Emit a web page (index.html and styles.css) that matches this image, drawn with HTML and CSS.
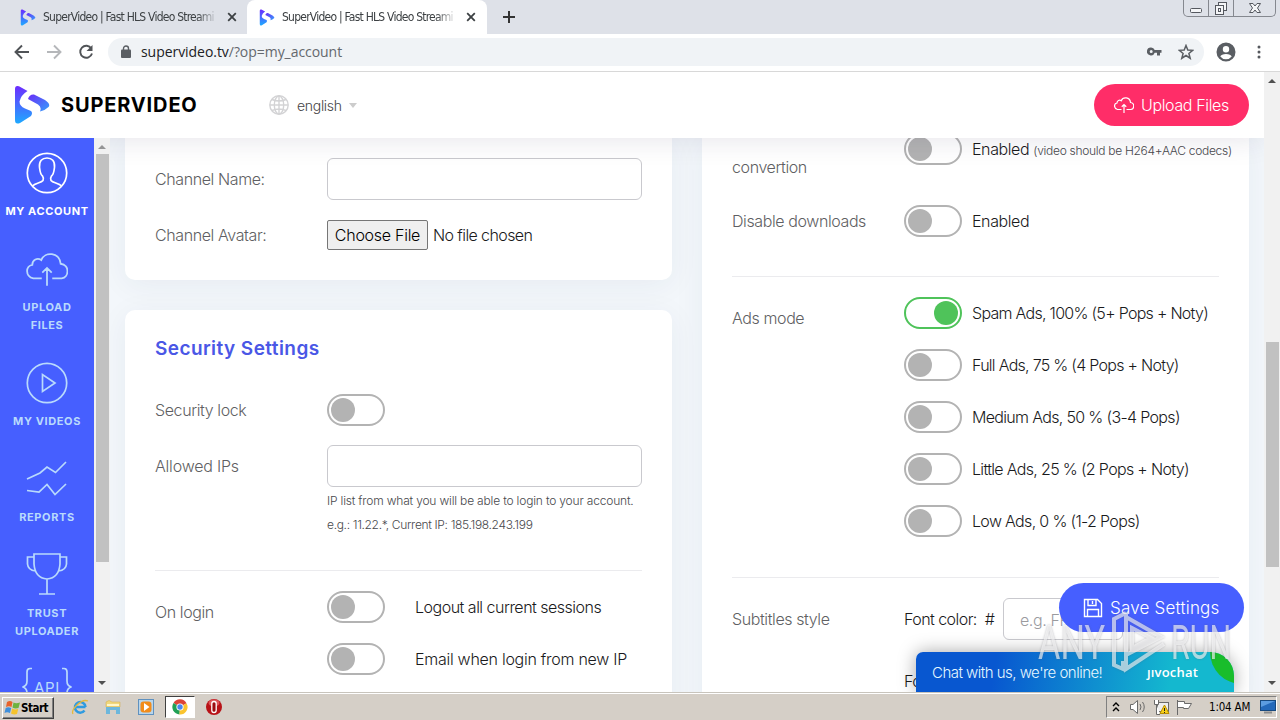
FILE: index.html
```html
<!DOCTYPE html>
<html lang="en">
<head>
<meta charset="utf-8">
<title>SuperVideo | Fast HLS Video Streaming</title>
<link rel="stylesheet" href="styles.css">
</head>
<body>
<svg width="0" height="0" class="defs">
  <defs>
    <linearGradient id="g1" x1="0" y1="0" x2="0" y2="1"><stop offset="0" stop-color="#6d2cff"/><stop offset="1" stop-color="#1eaaff"/></linearGradient>
    <linearGradient id="g2" x1="0" y1="0" x2="1" y2="1"><stop offset="0" stop-color="#6a2cf8"/><stop offset="1" stop-color="#35a0fb"/></linearGradient>
    <symbol id="logo" viewBox="0 0 36 40">
      <path fill="url(#g1)" d="M1 4Q1 0 5 1.200L13.500 6Q7 10 5.500 16.500Q5.500 21 11 23.500L17 26Q19 28 17 31L6 38Q1 40 1 35Z"/>
      <path fill="url(#g2)" d="M14 14Q15.500 9 20 9.500L31 15Q37 19 34.500 22Q31 25.500 26 26.500Q28 22 24 19.500Z"/>
    </symbol>
    <symbol id="cloud" viewBox="0 0 40 32">
      <path d="M15 25H7C-1 23-.5 13 6 12C6 7 11 5 14.500 7.500C18-1 32 0 33 11C42 12 41 24 34 25H25M20 32V15M15.500 19.500L20 15L24.500 19.500" fill="none" stroke="currentColor"/>
    </symbol>
  </defs>
</svg>

<div class="tabstrip">
  <div class="tab">
    <svg class="fav"><use href="#logo"/></svg><span class="tab-title">SuperVideo | Fast HLS Video Streami</span>
    <svg class="x" viewBox="0 0 10 10"><path d="M1.200 1.200L8.800 8.800M8.800 1.200L1.200 8.800"/></svg>
  </div>
  <div class="tab active">
    <svg class="fav"><use href="#logo"/></svg><span class="tab-title">SuperVideo | Fast HLS Video Streami</span>
    <svg class="x" viewBox="0 0 10 10"><path d="M1.200 1.200L8.800 8.800M8.800 1.200L1.200 8.800"/></svg>
  </div>
  <svg class="plus" viewBox="0 0 12 12"><path d="M6 0V12M0 6H12"/></svg>
  <div class="winbtns">
    <span class="wb"><svg width="14" height="16"><rect x="1.500" y="8.500" width="11" height="4" rx="1"/></svg></span>
    <span class="wb"><svg width="14" height="16"><rect x="4.500" y="2.500" width="8" height="8"/><rect x="1.500" y="5.500" width="8" height="9"/><rect x="4.500" y="8.500" width="2" height="3"/></svg></span>
    <span class="wb wide"><svg width="14" height="16"><path d="M1.500 3.500H5L7 6L9 3.500H12.500L9.500 8L12.500 12.500H9L7 10L5 12.500H1.500L4.500 8Z"/></svg></span>
  </div>
</div>

<div class="toolbar">
  <svg class="nav" viewBox="0 0 16 16"><path d="M15 8H2M8 1.500L1.500 8L8 14.500"/></svg>
  <svg class="nav dim" viewBox="0 0 16 16"><path d="M1 8H14M8 1.500L14.500 8L8 14.500"/></svg>
  <svg class="nav" viewBox="0 0 16 16"><path d="M13.300 4.500A6 6 0 1 0 14 9.500"/><path d="M14.500 1V7H8.500Z" class="fill"/></svg>
  <div class="omnibox">
    <svg class="lock" viewBox="0 0 10 13"><rect y="4.500" width="10" height="8.500" rx="1" fill="#5a5e63"/><path d="M2.500 5V3.500a2.500 2.500 0 0 1 5 0V5" fill="none" stroke="#5a5e63" stroke-width="1.400"/></svg>
    <span class="url"><b>supervideo.tv</b>/?op=my_account</span>
    <svg class="key" viewBox="0 0 15 9"><path d="M4.200 0.500a4 4 0 1 0 3.500 5.300H10V8.500h3V5.800h1.500V3H7.700A4 4 0 0 0 4.200.5ZM4.200 3a1.500 1.500 0 1 1 0 3a1.500 1.500 0 0 1 0-3Z" fill="#5a5e63" fill-rule="evenodd"/></svg>
    <svg class="star" viewBox="0 0 16 16"><path d="M8 1.500L9.800 6L14.700 6.300L10.900 9.400L12.200 14.200L8 11.500L3.800 14.200L5.100 9.400L1.300 6.300L6.200 6Z" fill="none" stroke="#5a5e63" stroke-width="1.500"/></svg>
  </div>
  <svg class="avatar" viewBox="0 0 20 20"><path fill-rule="evenodd" fill="#5a5e63" d="M10 .5a9.500 9.500 0 1 0 0 19a9.500 9.500 0 0 0 0-19ZM10 4a3.200 3.200 0 1 1 0 6.400A3.200 3.200 0 0 1 10 4ZM10 12c3 0 5.200 1.200 5.700 2.500a7.200 7.200 0 0 1-11.400 0C4.800 13.200 7 12 10 12Z"/></svg>
  <svg class="dots" viewBox="0 0 4 14"><circle cx="2" cy="2" r="1.500"/><circle cx="2" cy="7" r="1.500"/><circle cx="2" cy="12" r="1.500"/></svg>
</div>

<div class="viewport">
  <div class="page">
    <header class="header">
      <svg class="brand-mark"><use href="#logo"/></svg>
      <span class="brand">SUPERVIDEO</span>
      <svg class="globe" viewBox="0 0 20 20"><circle cx="10" cy="10" r="9.200"/><ellipse cx="10" cy="10" rx="4.700" ry="9"/><path d="M10 1V19M1 10H19M3 4.500Q10 7.500 17 4.500M3 15.500Q10 12.500 17 15.500"/></svg>
      <span class="lang">english</span><i class="caret"></i>
      <a class="btn-upload"><svg width="20" height="16"><use href="#cloud"/></svg><span>Upload Files</span></a>
    </header>
    <div class="body">
      <nav class="sidebar">
        <a class="item on"><svg width="42" height="42" viewBox="0 0 42 42"><circle cx="21" cy="21" r="19.700"/><path d="M6.500 34C9 31 15 31 17 28.500Q18 26 16.500 24C14 22 14 19 13.500 15C13 9 16 6 21 6S29 9 28.500 15C28 19 28 22 25.500 24Q24 26 25 28.500C27 31 33 31 35.500 34"/></svg><span>MY ACCOUNT</span></a>
        <a class="item"><svg class="cloudbig" width="42" height="34"><use href="#cloud"/></svg><span>UPLOAD<br>FILES</span></a>
        <a class="item"><svg width="42" height="42" viewBox="0 0 42 42"><circle cx="21" cy="21" r="19.700"/><path d="M16.500 12.500V29.500L29 21Z"/></svg><span>MY VIDEOS</span></a>
        <a class="item"><svg width="42" height="38" viewBox="0 0 42 38"><path d="M1 19L14 13L21 7L29.500 12.500L40 2M1 30.500L13 32L21 24.500L29 34.500L40 24"/></svg><span>REPORTS</span></a>
        <a class="item"><svg width="42" height="44" viewBox="0 0 42 44"><path d="M8 2H34V12Q33 26 21 27Q9 26 8 12ZM8 5H1.500V12Q2 18 9.500 19M34 5H40.500V12Q40 18 32.500 19M21 27V42M13 42H29"/></svg><span>TRUST<br>UPLOADER</span></a>
        <div class="item api"><svg width="52" height="30" viewBox="0 0 52 30"><path d="M11 1.500H9Q6 1.500 6 5V14Q6 19 1.500 20Q6 21 6 26V30M41 1.500H43Q46 1.500 46 5V14Q46 19 50.500 20Q46 21 46 26V30"/></svg><b>API</b></div>
      </nav>
      <div class="sb sb-side"><i class="up"></i><div class="thumb"></div><i class="down"></i></div>
      <main class="main">
        <div class="col">
          <section class="card channel">
            <div class="row"><label>Channel Name:</label><div class="input"></div></div>
            <div class="row"><label>Channel Avatar:</label><span class="filebtn"><span>Choose File</span></span><span class="nofile">No file chosen</span></div>
          </section>
          <section class="card security">
            <h2>Security Settings</h2>
            <div class="row lock-row"><label>Security lock</label><i class="toggle"></i></div>
            <div class="row"><label class="ips">Allowed IPs</label><div class="input"></div></div>
            <p class="hint"><span class="hint-a">IP list from what you will be able to login to your account.</span><br><span class="hint-b">e.g.: 11.22.*, Current IP: 185.198.243.199</span></p>
            <hr>
            <div class="row start"><label class="low">On login</label>
              <div class="stack wide-gap">
                <div class="opt"><i class="toggle"></i><span class="logout">Logout all current sessions</span></div>
                <div class="opt"><i class="toggle"></i><span class="email">Email when login from new IP</span></div>
              </div>
            </div>
          </section>
        </div>
        <div class="col">
          <section class="card right">
            <div class="row start"><label class="conv">convertion</label><div class="opt"><i class="toggle"></i><span>Enabled <small>(video should be H264+AAC codecs)</small></span></div></div>
            <div class="row dl"><label>Disable downloads</label><div class="opt"><i class="toggle"></i><span>Enabled</span></div></div>
            <hr>
            <div class="row start"><label class="low">Ads mode</label>
              <div class="stack ads">
                <div class="opt"><i class="toggle checked"></i><span>Spam Ads, 100% (5+ Pops + Noty)</span></div>
                <div class="opt"><i class="toggle"></i><span>Full Ads, 75 % (4 Pops + Noty)</span></div>
                <div class="opt"><i class="toggle"></i><span>Medium Ads, 50 % (3-4 Pops)</span></div>
                <div class="opt"><i class="toggle"></i><span>Little Ads, 25 % (2 Pops + Noty)</span></div>
                <div class="opt"><i class="toggle"></i><span>Low Ads, 0 % (1-2 Pops)</span></div>
              </div>
            </div>
            <hr class="second">
            <div class="row"><label>Subtitles style</label><span class="fc">Font color:&nbsp; #</span><div class="input hex">e.g. FFFFFF</div></div>
            <div class="row size"><label></label><span class="fc">Font size:</span></div>
          </section>
        </div>
      </main>
    </div>
    <a class="save"><svg width="20" height="20" viewBox="0 0 20 20"><path d="M1.500 1.500H14.500L18.500 5.500V18.500H1.500ZM5 1.500V7.500H13V1.500M9.500 3V6M4.500 18.500V11.500H15.500V18.500"/></svg><span>Save Settings</span></a>
    <div class="chat"><span>Chat with us, we're online!</span><em>ȷıvochat</em><i class="leaf"></i></div>
  </div>
  <div class="sb sb-page"><i class="up"></i><div class="thumb"></div><i class="down"></i></div>
  <div class="watermark"><span class="wm">ANY</span>
    <svg width="58" height="64" viewBox="0 0 58 64"><path d="M17 2L5 8V54L14 58V50M17 2V44L52 26L17 6M17 44V58L55 33M23 17L42 27L23 37Z"/></svg>
    <span class="wm run">RUN</span></div>
</div>

<div class="taskbar">
  <div class="start-btn"><svg width="17" height="16" viewBox="0 0 17 16"><path fill="#e8622a" d="M3 2Q6 0 8.500 2L7.500 7Q5 5.500 2 7Z"/><path fill="#6eb33f" d="M9.500 2.500Q12 4 16 2.500L14.500 8Q11 9 8.500 7.500Z"/><path fill="#3f8fdc" d="M1.700 8Q4 6.500 7.200 8L6 13Q3 11.500.5 13Z"/><path fill="#f5c32c" d="M8.200 8.500Q11 10 14.200 9L13 14Q10 15 7 13.500Z"/></svg><b>Start</b></div>
  <svg class="q ie" viewBox="0 0 18 18"><path d="M14.500 9H5M14.500 9A5.300 5.300 0 1 0 13.500 12.500" fill="none" stroke="#2f9be0" stroke-width="2.500"/><path d="M2 16Q0 13 6 7T17 3" fill="none" stroke="#e5b93c" stroke-width="1.300"/></svg>
  <svg class="q" viewBox="0 0 18 18"><path d="M2 4Q5 1 8 4H16V9H2Z" fill="#efd77d" stroke="#d2aa4b" stroke-width=".5"/><path d="M2 9H16V16H12V12H6V16H2Z" fill="#6db7dc"/><path d="M3 7H15" stroke="#fff6c8" stroke-width="2"/></svg>
  <svg class="q" viewBox="0 0 18 18"><rect x="1.500" y="1.500" width="15" height="15" fill="#b9d5ea" stroke="#5f91bf"/><rect x="3.500" y="3.500" width="11" height="11" rx="3" fill="#f28c1a"/><path d="M7 5V13L12.500 9Z" fill="#fff"/></svg>
  <div class="running"><svg width="16" height="16" viewBox="0 0 16 16"><path fill="#dc4437" d="M8 8L1.500 4A7.500 7.500 0 0 1 14.500 4.200Z"/><path fill="#21a056" d="M8 8L1.500 4A7.500 7.500 0 0 0 7.500 15.500Z"/><path fill="#fbc42e" d="M8 8L14.500 4.200A7.500 7.500 0 0 1 7.500 15.500Z"/><circle cx="8" cy="8" r="3.600" fill="#fff"/><circle cx="8" cy="8" r="2.700" fill="#4a87ee"/></svg></div>
  <svg class="q opera" viewBox="0 0 18 18"><circle cx="9" cy="9" r="8" fill="#b81217"/><ellipse cx="9" cy="5" rx="5.500" ry="3.500" fill="#e0565a"/><rect x="6.800" y="3.500" width="4.400" height="11" rx="2.200" fill="#9b0c10" stroke="#fff" stroke-width="1.300"/></svg>
  <div class="tray">
    <svg width="8" height="12" viewBox="0 0 8 12" class="chev"><path d="M1 5L4 2L7 5M1 10L4 7L7 10"/></svg>
    <svg width="18" height="16" viewBox="0 0 18 16" class="line"><path d="M1.500 5.500H4L8.500 1.500V14.500L4 10.500H1.500Z" fill="#fff"/><path d="M11 5Q13 8 11 11M13.500 3Q17 8 13.500 13" fill="none"/></svg>
    <svg width="17" height="17" viewBox="0 0 17 17" class="line"><rect x="4.500" y="3.500" width="11" height="9" fill="#eee"/><path d="M1.500 1V5.500H5.500V1M3.500 5V15.500H7" fill="#fff"/><path d="M11.500 6L16 14.500H7Z" fill="#f7cf18" stroke="#b98d00"/><path d="M11.500 9V12M11.500 13V14" stroke="#222"/></svg>
    <svg width="17" height="17" viewBox="0 0 17 17" class="line"><path d="M1.500 1V16M1.500 2.500H8.500V4.500H15.500L12.500 9.500H7.500V8.500H1.500" fill="#fff"/></svg>
    <span class="clock">1:04 AM</span>
    <svg width="16" height="14" viewBox="0 0 16 14" class="desk"><rect x=".5" y=".5" width="15" height="10" fill="#2469ba" stroke="#17497f"/><path d="M1 1H15L1 7Z" fill="#5c9ce0"/><path d="M4 12.500H12" stroke="#8d8d8d" stroke-width="2"/></svg>
  </div>
</div>
</body>
</html>
```
FILE: styles.css
```css
* { box-sizing: border-box; }
body { margin: 0; width: 1280px; height: 720px; overflow: hidden; display: flex; flex-direction: column; background: #fff; font-family: Inter, "Liberation Sans", sans-serif; font-size: 16px; font-weight: 300; color: #1a1a1c; }
svg { display: block; flex: none; }
.defs { position: absolute; }

/* Browser tabs */
.tabstrip { height: 34px; flex: none; background: #dee1e8; display: flex; align-items: flex-start; }
.tab { width: 240px; height: 34px; display: flex; align-items: center; padding-left: 13px; margin-left: 7px; border-radius: 8px 8px 0 0; }
.tab.active { background: #fff; margin-left: 0; padding-left: 12px; }
.fav { width: 16px; height: 17px; margin-right: 7px; }
.tab-title { width: 175px; overflow: hidden; white-space: nowrap; font: 12px "DejaVu Sans Condensed", "DejaVu Sans", sans-serif; font-stretch: condensed; letter-spacing: -.76px; color: #3c4043; -webkit-mask-image: linear-gradient(90deg, #000 88%, transparent); mask-image: linear-gradient(90deg, #000 88%, transparent); }
.x { width: 10px; height: 10px; margin-left: 9px; }
.x path { stroke: #3c4043; stroke-width: 1.8; }
.plus { width: 12px; height: 12px; margin: 11px 0 0 16px; }
.plus path { stroke: #333; stroke-width: 2; }
.winbtns { margin-left: auto; margin-right: 4px; width: 93px; height: 17px; display: flex; border: 1px solid #85888f; border-top: 0; border-radius: 0 0 5px 5px; }
.wb { width: 25px; display: flex; justify-content: center; border-right: 1px solid #85888f; }
.wb.wide { width: 41px; border: 0; }
.wb svg { fill: #f4f5f7; stroke: #55585f; stroke-width: 1; }

/* Browser toolbar */
.toolbar { height: 38px; flex: none; background: #fff; border-bottom: 1px solid #d8d8d8; display: flex; align-items: center; padding: 0 0 2px 14px; }
.nav { width: 16px; height: 16px; margin-right: 16px; fill: none; stroke: #505357; stroke-width: 1.9; }
.nav.dim { stroke: #b5b7ba; }
.nav .fill { fill: #505357; stroke: none; }
.omnibox { width: 1096px; height: 28px; margin-left: -2px; border-radius: 14px; background: #f0f3f6; display: flex; align-items: center; padding: 0 10px 0 13px; }
.lock { width: 10px; height: 13px; }
.url { margin-left: 10px; font: 14px "Open Sans", "Noto Sans", sans-serif; letter-spacing: -.05px; color: #64686d; }
.url b { font-weight: 400; color: #202124; }
.key { width: 15px; height: 9px; margin-left: auto; }
.star { width: 16px; height: 16px; margin-left: 16px; }
.avatar { width: 20px; height: 20px; margin-left: 12px; }
.dots { width: 4px; height: 14px; margin-left: 21px; fill: #55585d; }

/* Page frame */
.viewport { height: 620px; flex: none; display: flex; position: relative; }
.page { width: 1264px; height: 620px; position: relative; overflow: hidden; }
.header { height: 66px; background: #fff; display: flex; align-items: center; padding: 0 15px 0 14px; position: relative; z-index: 2; box-shadow: 0 0 30px rgba(35, 31, 80, .13); }
.brand-mark { width: 36px; height: 40px; }
.brand { margin-left: 11px; width: 136px; font: 700 20px Inter, sans-serif; letter-spacing: .85px; color: #000; }
.globe { width: 20px; height: 20px; margin-left: 72px; fill: none; stroke: #d3d3d5; stroke-width: 1.400; }
.lang { margin-left: 8px; width: 44px; font-size: 14px; color: #444; letter-spacing: -.3px; }
.caret { margin-left: 8px; border: 4.500px solid transparent; border-top: 5px solid #ccc; border-bottom: 0; }
.btn-upload { margin-left: auto; width: 155px; height: 42px; border-radius: 21px; background: #ff2d68; color: #fff; display: flex; align-items: center; padding-left: 20px; }
.btn-upload span { margin-left: 7px; white-space: nowrap; letter-spacing: -.35px; }
.btn-upload svg { stroke-width: 2.400; }
.body { height: 554px; display: flex; background: #f3f7fb; }

/* Sidebar */
.sidebar { width: 94px; height: 554px; overflow: hidden; background: #465fff; padding-top: 14px; display: flex; flex-direction: column; position: relative; z-index: 3; }
.item { display: flex; flex-direction: column; align-items: center; text-align: center; color: #b9dafc; font-size: 11px; line-height: 18px; font-weight: 700; letter-spacing: .6px; margin-bottom: 32px; }
.item svg { fill: none; stroke: currentColor; stroke-width: 1.7; margin-bottom: 8px; }
.item.on { color: #fff; }
.item .cloudbig { margin-bottom: 12px; }
.item:nth-child(2) { margin-bottom: 28px; }
.item:nth-child(3) { margin-bottom: 30px; }
.item:nth-child(4) svg { margin-bottom: 10px; }
.item:nth-child(4) { margin-bottom: 26px; }
.item:nth-child(5) { margin-bottom: 27px; }
.api b { margin-top: -26px; font-weight: 400; font-size: 15px; }

/* Scrollbars */
.sb { width: 16px; background: #f1f1f1; display: flex; flex-direction: column; align-items: center; position: relative; z-index: 3; }
.sb i { border: 4px solid transparent; }
.sb .up { border-top: 0; border-bottom: 4px solid #505050; margin-top: 7px; }
.sb .down { border-bottom: 0; border-top: 4px solid #505050; margin-top: auto; margin-bottom: 7px; }
.sb .thumb { width: 13px; background: #c1c1c1; }
.sb-side .up { border-bottom-color: #969696; }
.sb-side .thumb { height: 408px; margin-top: 5px; }
.sb-page .thumb { height: 225px; margin-top: 259px; }

/* Cards */
.main { flex: 1; height: 554px; overflow: hidden; display: flex; gap: 30px; padding: 0 15px; }
.col { width: 547px; flex: none; display: flex; flex-direction: column; gap: 30px; }
.card { flex: none; background: #fff; border-radius: 10px; padding: 0 30px 30px; box-shadow: 0 5px 30px rgba(35, 50, 90, .06); }
.channel { height: 142px; padding-top: 20px; border-radius: 0 0 10px 10px; display: flex; flex-direction: column; gap: 20px; }
.security { height: 420px; padding-top: 26px; }
.right { height: 620px; border-radius: 0; }
.row { display: flex; align-items: center; }
.row.start { align-items: flex-start; }
label { width: 172px; flex: none; color: #5f5f63; line-height: 24px; letter-spacing: -.4px; }
.ips { letter-spacing: -.2px; }
.low { margin-top: 9px; }
.input { width: 315px; height: 42px; flex: none; border: 1px solid #c9c9ce; border-radius: 6px; background: #fff; }
.filebtn { width: 101px; height: 30px; flex: none; border: 1px solid #767676; border-radius: 2px; background: #efefef; color: #000; display: flex; align-items: center; justify-content: center; white-space: nowrap; letter-spacing: -.27px; }
.nofile { margin-left: 5px; white-space: nowrap; letter-spacing: -.6px; }
h2 { margin: 0 0 33px; font-size: 19px; line-height: 25px; font-weight: 600; letter-spacing: .42px; color: #4a57e6; }
.lock-row { margin-bottom: 19px; }
.toggle { width: 58px; height: 32px; flex: none; border: 2px solid #b3b3b3; border-radius: 16px; padding: 2px; display: flex; align-items: center; }
.toggle::before { content: ""; width: 24px; height: 24px; border-radius: 50%; background: #b3b3b3; }
.toggle.checked { border-color: #4fc35a; justify-content: flex-end; }
.toggle.checked::before { background: #4fc35a; }
.hint { margin: 2px 0 0 172px; font-size: 12px; line-height: 24px; color: #48484c; white-space: nowrap; }
.hint-a { letter-spacing: -.18px; }
.hint-b { letter-spacing: -.33px; }
hr { border: 0; height: 1px; background: #ebebee; margin: 33px 0 20px; }
.stack { display: flex; flex-direction: column; gap: 20px; }
.opt { display: flex; align-items: center; gap: 10px; white-space: nowrap; height: 32px; letter-spacing: -.4px; }
.wide-gap .opt { gap: 30px; }
.logout { letter-spacing: -.5px; }
.email { letter-spacing: -.27px; }
.ads .opt { letter-spacing: -.72px; }
.ads .opt:nth-child(n+3) { letter-spacing: -.67px; }
.opt small { font-size: 12px; color: #48484c; letter-spacing: -.3px; }
.conv { margin-top: 22px; }
.right > .row:first-child { margin-top: -5px; height: 72px; }
.right hr { margin: 39px 0 20px; }
.right .second { margin: 40px 0 20px; }
.fc { white-space: pre; width: 99px; letter-spacing: -.55px; }
.hex { width: 120px; color: #9b9b9f; padding: 11px 16px; line-height: 20px; white-space: nowrap; letter-spacing: -.4px; }
.size { margin-top: 31px; }

/* Floating controls */
.save { position: absolute; left: 1059px; top: 511px; width: 185px; height: 49px; border-radius: 25px; background: #465fff; color: #fff; display: flex; align-items: center; padding-left: 24px; z-index: 4; white-space: nowrap; }
.save svg { fill: none; stroke: #fff; stroke-width: 1.400; }
.save span { margin-left: 7px; font-size: 17px; letter-spacing: .2px; }
.chat { position: absolute; left: 916px; top: 580px; width: 318px; height: 40px; border-radius: 7px 24px 0 0; overflow: hidden; background: linear-gradient(100deg, #0857d0 25%, #14b8cf 80%); box-shadow: 0 0 18px rgba(0, 0, 0, .35); color: #e6f7ff; display: flex; align-items: center; padding-left: 16px; z-index: 5; font-size: 15px; white-space: nowrap; letter-spacing: -.52px; }
.chat em { margin-left: auto; margin-right: 36px; font: 600 13px "Open Sans", sans-serif; letter-spacing: .2px; color: #fff; }
.leaf { position: absolute; right: -8px; top: -14px; width: 32px; height: 46px; background: #19bd2b; border-radius: 0 0 0 34px; }
.watermark { position: absolute; left: 1038px; top: 539px; width: 196px; height: 64px; z-index: 8; display: flex; color: rgba(255, 255, 255, .62); filter: drop-shadow(0 0 1px rgba(90, 90, 100, .6)); }
.watermark svg { fill: none; stroke: rgba(255, 255, 255, .6); stroke-width: 4; margin-left: 5px; }
.wm { width: 66px; font: 400 49px/64px Roboto, sans-serif; transform: scaleX(.7); transform-origin: 0 0; }
.wm.run { margin-left: 4px; width: 60px; transform: scaleX(.62); }

/* Taskbar */
.taskbar { height: 28px; flex: none; background: #d5cfc7; border-top: 1px solid #c8c4bc; box-shadow: inset 0 1px #fff; display: flex; align-items: center; font: 11px "DejaVu Sans Condensed", "DejaVu Sans", sans-serif; color: #000; }
.start-btn { width: 52px; height: 22px; margin: 2px 0 0 2px; border: 1px solid; border-color: #fff #404040 #404040 #fff; box-shadow: inset -1px -1px #808080; display: flex; align-items: center; padding-left: 1px; }
.start-btn b { margin-left: 0; font-size: 11.500px; letter-spacing: -.5px; font-stretch: condensed; }
.q { width: 18px; height: 18px; margin: 1px 0 0 16px; }
.ie { margin-left: 17px; }
.q + .q { margin-left: 15px; }
.running { width: 30px; height: 22px; margin: 1px 0 0 10px; background: #fff; border: 1px solid; border-color: #404040 #fff #fff #404040; display: flex; align-items: center; justify-content: center; }
.opera { margin-left: 10px; }
.tray { margin: 1px 3px 0 auto; width: 171px; height: 22px; border: 1px solid; border-color: #808080 #fff #fff #808080; display: flex; align-items: center; padding-left: 5px; }
.chev { fill: none; stroke: #000; stroke-width: 1.400; margin-right: 9px; }
.line { stroke: #6a6a6a; stroke-width: 1; margin-right: 6px; }
.clock { margin-left: 10px; letter-spacing: -.2px; white-space: nowrap; font-size: 11.500px; }
.desk { margin-left: auto; }
```
